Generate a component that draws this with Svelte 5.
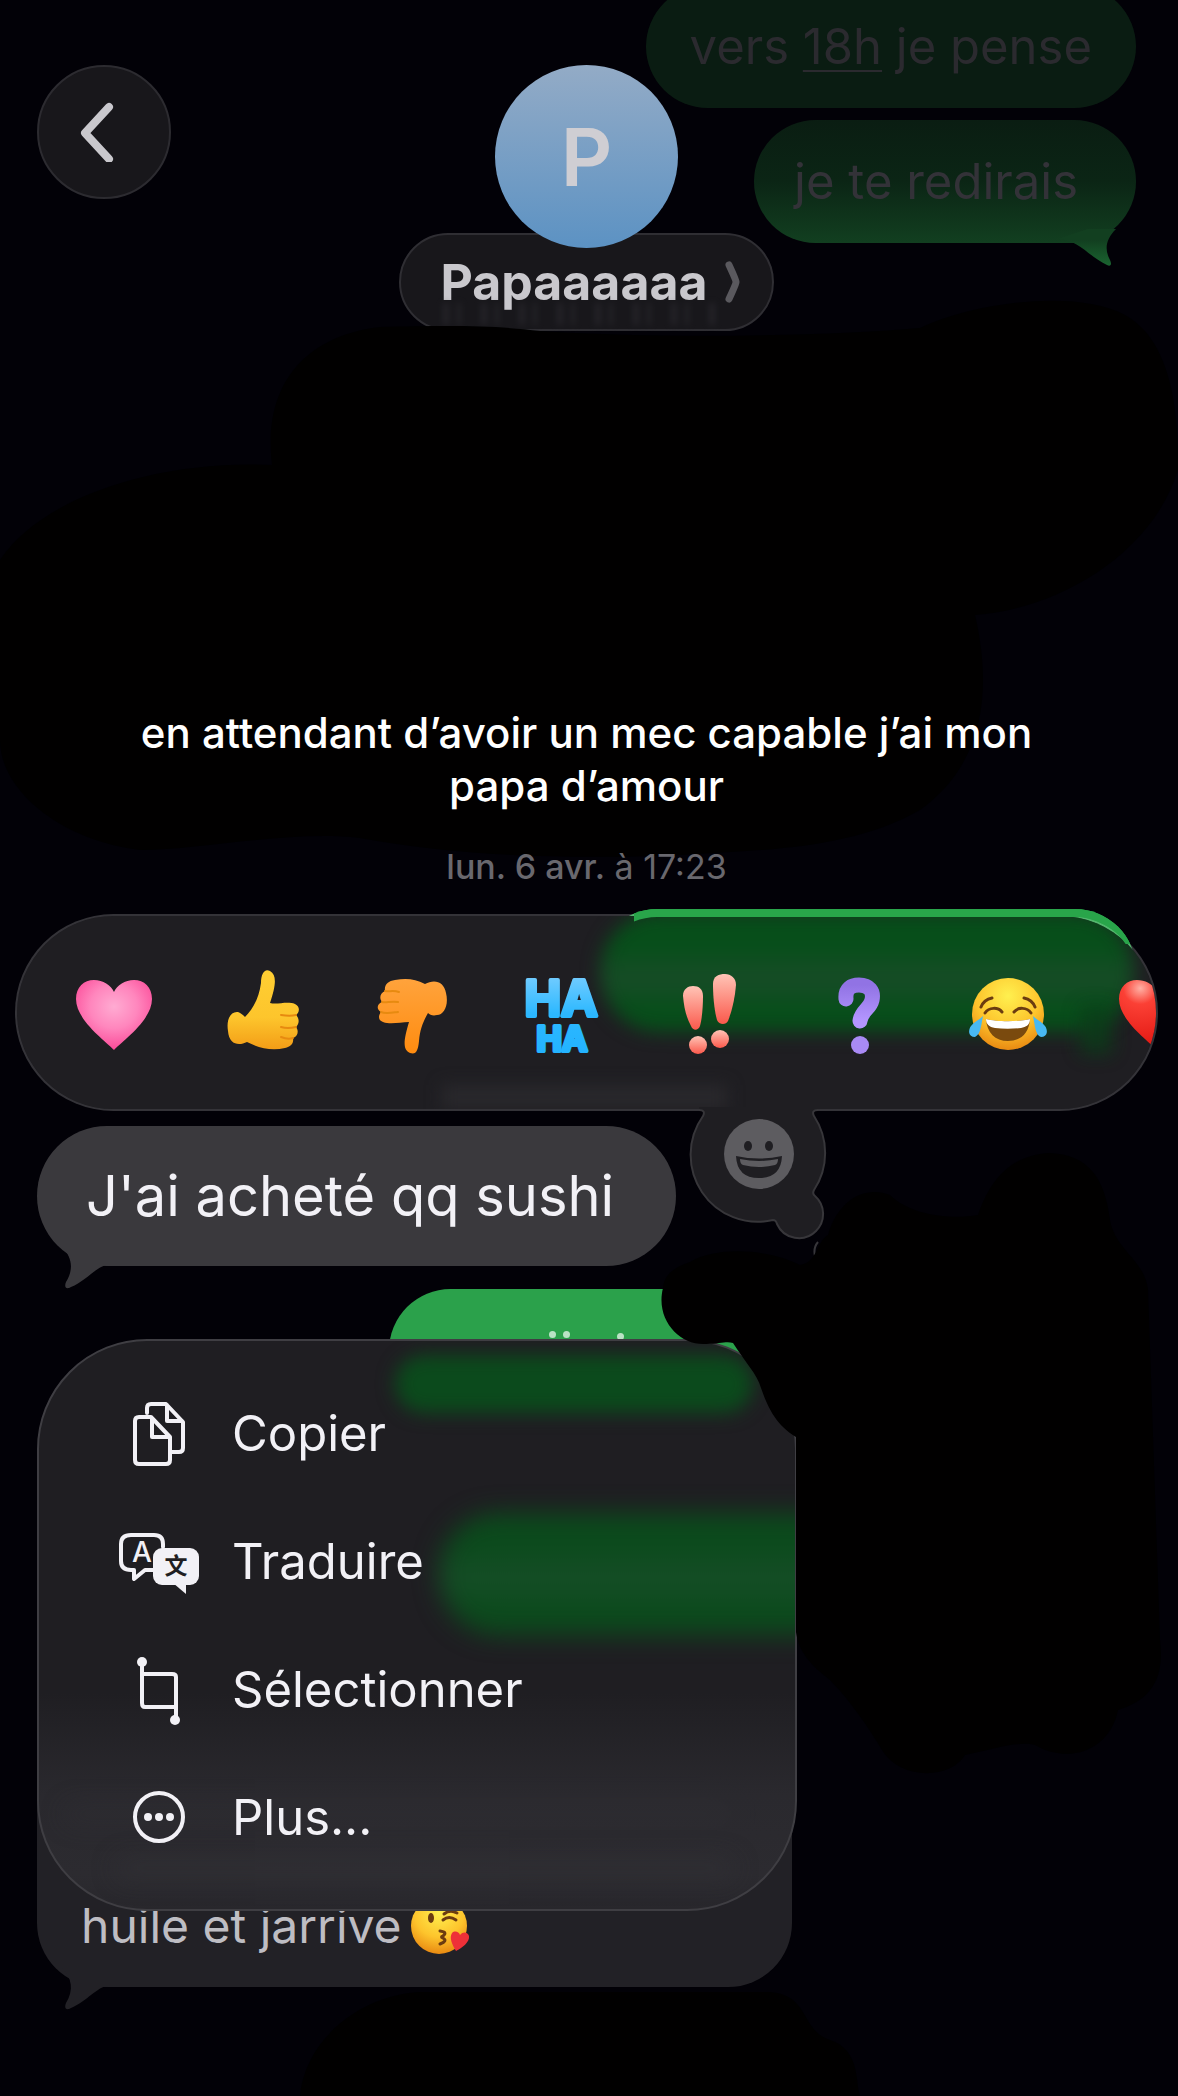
<script lang="ts">
  // Message thread with the reaction picker and context menu open

  interface Reaction {
    id: string;
    label: string;
  }

  interface Action {
    id: string;
    label: string;
  }

  const contact = { name: 'Papaaaaaa', initial: 'P' };

  const reactions: Reaction[] = [
    { id: 'heart', label: 'Cœur' },
    { id: 'up', label: 'Pouce en haut' },
    { id: 'down', label: 'Pouce en bas' },
    { id: 'haha', label: 'Haha' },
    { id: 'exclaim', label: 'Exclamation' },
    { id: 'question', label: 'Question' },
    { id: 'joy', label: 'Larmes de joie' },
    { id: 'red', label: 'Cœur rouge' },
  ];

  const actions: Action[] = [
    { id: 'copy', label: 'Copier' },
    { id: 'translate', label: 'Traduire' },
    { id: 'select', label: 'Sélectionner' },
    { id: 'more', label: 'Plus...' },
  ];

  let selected = $state('');

  function react(id: string) {
    selected = selected === id ? '' : id;
  }
</script>

{#snippet reactionIcon(id: string)}
  <svg class="emoji" viewBox="0 0 84 84" width="84" height="84" aria-hidden="true">
    {#if id === 'heart' || id === 'red'}
      <path
        d="M42 79C36 72 4 50 4 28C4 16 12 9 22 9C31 9 39 14 42 21C45 14 53 9 62 9C72 9 80 16 80 28C80 50 48 72 42 79Z"
        fill="url(#{id === 'heart' ? 'pink' : 'red'})"
      />
    {:else if id === 'up'}
      <path
        d="M24 46C32 38 38 27 40 12C40 2 44 -3 49 0C56 4 55 14 49 32C56 34 66 30 74 33C80 36 78 42 75 44C79 48 78 53 75 56C78 60 77 65 72 67C73 72 70 76 64 77C50 80 38 77 26 71C18 75 8 74 7 60C5 48 10 40 17 41C20 42 22 44 24 46Z"
        fill="url(#thumb)"
      />
      <path d="M60 44C66 45 71 45 75 44M60 56C66 58 71 57 75 56M60 66C65 68 69 68 72 67" class="crease" />
    {:else if id === 'down'}
      <path
        d="M58 42C53 51 50 58 49 70C48 80 46 84 40 82C33 79 33 71 39 51C30 51 21 54 13 51C7 49 9 43 11 41C6 38 7 33 12 31C9 27 10 22 15 20C14 14 18 10 25 9C37 7 45 8 55 13C64 8 74 10 76 22C79 34 74 44 67 44C63 45 60 44 58 42Z"
        fill="url(#thumbDown)"
      />
      <path d="M28 41C20 42 15 43 11 41M28 31C21 30 16 32 12 31M29 21C23 19 19 21 15 20" class="crease" />
    {:else if id === 'haha'}
      <text class="ha"><tspan x="42" y="45" class="big">HA</tspan><tspan x="43" y="80" class="small">HA</tspan></text>
    {:else if id === 'exclaim'}
      <path d="M15 25C15 18 20 15 25 15C31 15 35 18 35 25C35 36 34 48 32 55C30 60 25 60 23 55C18 46 16 36 15 25Z" fill="url(#coral)" />
      <path d="M45 13C45 5 51 3 57 3C63 3 68 7 68 14C67 27 64 40 60 50C58 54 51 54 49 49C46 38 45 24 45 13Z" fill="url(#coral)" />
      <circle cx="30" cy="74" r="9" fill="url(#coral)" />
      <circle cx="52" cy="68" r="9" fill="url(#coral)" />
    {:else if id === 'question'}
      <path d="M29 28C28 17 35 14 42 14C52 14 57 20 55 29C53 38 44 40 43 50" class="hook" />
      <circle cx="43" cy="74" r="9" fill="#a98af5" />
    {:else if id === 'joy'}
      <circle cx="42" cy="43" r="36" fill="url(#face)" />
      <path d="M20 48C31 51 53 51 64 48C63 62 55 70 42 70C29 70 21 62 20 48Z" fill="#7a4a0e" />
      <path d="M20 48C31 51 53 51 64 48C64 54 60 56 55 57C46 58 37 58 29 57C23 56 20 53 20 48Z" fill="#fff" />
      <path d="M19 42C23 36 32 36 36 41M48 41C52 36 61 36 65 42M15 36C17 31 21 28 26 27M69 36C67 31 63 28 58 27" class="brow" />
      <path d="M17 45C15 54 15 63 9 66C2 66 2 59 5 55C8 51 13 49 17 45Z" fill="#48b9f2" />
      <path d="M67 45C69 54 69 64 75 66C82 66 82 59 79 55C76 51 71 49 67 45Z" fill="#48b9f2" />
    {/if}
  </svg>
{/snippet}

{#snippet actionIcon(id: string)}
  <svg class="action-icon" viewBox="0 0 84 72" width="84" height="72" aria-hidden="true">
    {#if id === 'copy'}
      <path d="M22 16V11Q22 7 26 7H41L58 25V51Q58 55 54 55H47M42 8V24H57" />
      <path d="M14 20H26L45 40V63Q45 67 41 67H14Q10 67 10 63V24Q10 20 14 20M27 21V40H44" />
    {:else if id === 'translate'}
      <path d="M28 45H20L9 54V45H6Q-4 45 -4 36V19Q-4 10 6 10H29Q38 10 38 19V22" />
      <text x="17" y="37" class="latin">A</text>
      <rect x="28" y="23" width="46" height="37" rx="9" class="solid" />
      <path d="M48 58L61 69V58Z" class="solid" />
      <text x="51" y="49" class="han">文</text>
    {:else if id === 'select'}
      <path d="M17 12V50Q17 54 20 54H50M17 21H47Q51 21 51 24V67" />
      <circle cx="17" cy="9" r="5" class="solid" />
      <circle cx="50" cy="67" r="5" class="solid" />
    {:else}
      <circle cx="34" cy="36" r="24" />
      <circle cx="23" cy="36" r="4" class="solid" />
      <circle cx="34" cy="36" r="4" class="solid" />
      <circle cx="45" cy="36" r="4" class="solid" />
    {/if}
  </svg>
{/snippet}

<svg class="defs" width="0" height="0" aria-hidden="true">
  <defs>
    <radialGradient id="pink" cx="50%" cy="38%" r="62%">
      <stop offset="0" stop-color="#ffabd2" />
      <stop offset="0.5" stop-color="#ff86bd" />
      <stop offset="1" stop-color="#fb4a98" />
    </radialGradient>
    <radialGradient id="red" cx="28%" cy="12%" r="90%">
      <stop offset="0" stop-color="#ffb0a4" />
      <stop offset="0.25" stop-color="#fb4035" />
      <stop offset="1" stop-color="#e0140f" />
    </radialGradient>
    <linearGradient id="thumb" x1="0" y1="0" x2="0" y2="1">
      <stop offset="0" stop-color="#ffcf33" />
      <stop offset="0.6" stop-color="#fdc52c" />
      <stop offset="1" stop-color="#f39d17" />
    </linearGradient>
    <linearGradient id="thumbDown" x1="0" y1="0" x2="0" y2="1">
      <stop offset="0" stop-color="#ffa33c" />
      <stop offset="1" stop-color="#ff8c10" />
    </linearGradient>
    <linearGradient id="coral" x1="0" y1="0" x2="0" y2="1">
      <stop offset="0" stop-color="#ffc4b6" />
      <stop offset="1" stop-color="#fb594c" />
    </linearGradient>
    <linearGradient id="violet" x1="0" y1="0" x2="0" y2="1">
      <stop offset="0" stop-color="#9173e4" />
      <stop offset="1" stop-color="#b496ff" />
    </linearGradient>
    <linearGradient id="ice" x1="0" y1="0" x2="0" y2="1">
      <stop offset="0" stop-color="#7fd0ff" />
      <stop offset="0.5" stop-color="#2cb8ff" />
      <stop offset="1" stop-color="#22b2ff" />
    </linearGradient>
    <radialGradient id="face" cx="50%" cy="25%" r="75%">
      <stop offset="0" stop-color="#fff04f" />
      <stop offset="0.6" stop-color="#fdc42c" />
      <stop offset="1" stop-color="#e98a12" />
    </radialGradient>
    <linearGradient id="sentTail" x1="0" y1="0" x2="0" y2="1">
      <stop offset="0.3" stop-color="#123f20" />
      <stop offset="1" stop-color="#1a6430" />
    </linearGradient>
  </defs>
</svg>

<main class="screen">
  <div class="top">
    <div class="sent-group">
      <p class="bubble sent faded">vers <u>18h</u> je pense</p>
      <p class="bubble sent fading">
        je te redirais
        <svg class="tail right" viewBox="0 0 44 36" width="44" height="36" aria-hidden="true">
          <path d="M-16 10C4 10 14 27 33 36C37 38 38 35 36 31C30 20 32 10 42 0L14 0Z" fill="url(#sentTail)" />
        </svg>
      </p>
    </div>

    <header class="header">
      <button class="back" aria-label="Retour">
        <svg viewBox="0 0 60 60" width="60" height="60" aria-hidden="true">
          <path d="M35 5L11 31L35 57" />
        </svg>
      </button>
      <div class="contact">
        <div class="avatar">{contact.initial}</div>
        <button class="name">
          {contact.name}
          <svg viewBox="0 0 20 44" width="20" height="44" aria-hidden="true">
            <path d="M7 5Q14 20 14 22Q14 24 7 39" />
          </svg>
          <span class="ghost"></span>
        </button>
      </div>
    </header>
  </div>

  <div class="thread">
    <h1 class="caption">en attendant d’avoir un mec capable j’ai mon papa d’amour</h1>
    <time class="date" datetime="04-06T17:23"><b>lun. 6 avr.</b> à 17:23</time>

    <section class="picker" aria-label="Réactions">
      <div class="under"></div>
      <div class="bar">
        <span class="glow"></span>
        <span class="glow-tail"></span>
        <span class="haze"></span>
        {#each reactions as { id, label } (id)}
          <button class="reaction" aria-label={label} aria-pressed={selected === id} onclick={() => react(id)}>
            {@render reactionIcon(id)}
          </button>
        {/each}
      </div>
      <div class="lip"></div>
      <button class="more-emoji" aria-label="Autres emojis">
        <svg viewBox="0 0 160 160" width="160" height="160" aria-hidden="true">
          <path
            class="pod-fill"
            d="M19 6Q26 6 23 12A67 67 0 0 0 93 116Q96 116 97 120A24 24 0 0 0 136 127A24 24 0 0 0 135 92Q132 90 134 86A67 67 0 0 0 134 12Q131 6 138 6V3H19Z"
          />
          <path
            class="pod-line"
            d="M19 6Q26 6 23 12A67 67 0 0 0 93 116Q96 116 97 120A24 24 0 0 0 136 127A24 24 0 0 0 135 92Q132 90 134 86A67 67 0 0 0 134 12Q131 6 138 6M138 138Q133 144 135 152"
          />
          <circle cx="79" cy="50" r="35" fill="#5d5c60" />
          <ellipse cx="68" cy="42" rx="4" ry="5" fill="#1f1e22" />
          <ellipse cx="89" cy="42" rx="4" ry="5" fill="#1f1e22" />
          <path d="M56 52Q79 57 102 52Q101 74 79 74Q57 74 56 52Z" fill="#1f1e22" />
          <path d="M60 55Q79 59 98 55Q98 60 95 61Q79 65 63 61Q60 60 60 55Z" fill="#5d5c60" />
        </svg>
      </button>
    </section>

    <p class="bubble received">
      J'ai acheté qq sushi
      <svg class="tail left" viewBox="0 0 52 42" width="52" height="42" aria-hidden="true">
        <path d="M0 0C10 10 12 22 4 35C2 40 4 43 9 40C24 34 36 18 46 18H52V0Z" fill="#3a393d" />
      </svg>
    </p>

    <div class="bubble sent peek">
      <span></span><span></span><span></span>
    </div>

    <ul class="menu">
      <li class="backdrop" aria-hidden="true">
        <span class="green one"></span>
        <span class="green two"></span>
        <span class="gray one"></span>
        <span class="gray two"></span>
      </li>
      {#each actions as { id, label } (id)}
        <li>
          <button class="action">
            {@render actionIcon(id)}
            {label}
          </button>
        </li>
      {/each}
    </ul>

    <p class="bubble received dim">
      huile et jarrive<svg class="kiss" viewBox="0 0 60 60" width="60" height="60" role="img" aria-label="😘">
        <circle cx="29" cy="30" r="28" fill="url(#face)" />
        <ellipse cx="21" cy="22" rx="3" ry="5" fill="#6b3c10" />
        <path d="M33 24Q39 19 46 24M34 18Q40 13 47 17M9 13Q13 7 19 8M30 35Q38 36 33 40Q30 41 33 42Q38 45 30 48" class="wink" />
        <path d="M46 55C42 48 39 42 42 37C45 34 49 36 50 39C53 35 58 36 59 40C60 46 52 52 46 55Z" fill="#ee3038" />
      </svg>
      <svg class="tail left" viewBox="0 0 52 42" width="52" height="42" aria-hidden="true">
        <path d="M0 0C10 10 12 22 4 35C2 40 4 43 9 40C24 34 36 18 46 18H52V0Z" fill="#222126" />
      </svg>
    </p>
  </div>

  <!-- brush strokes hiding part of the thread -->
  <svg class="brush" viewBox="0 0 1178 2096" aria-hidden="true">
    <path
      d="M272 465C262 380 310 335 380 327C460 325 500 326 540 331C680 340 840 335 920 328C980 300 1080 290 1125 315C1180 345 1178 440 1178 470C1150 560 1050 610 975 615C990 680 990 760 920 810C850 850 760 850 680 855C560 860 450 855 360 838C290 830 200 850 140 850C60 840 0 790 0 740V560C40 500 150 460 272 465Z"
    />
    <path
      d="M663 1288C655 1320 680 1346 706 1344C720 1344 726 1341 733 1343C745 1362 757 1374 761 1388C768 1408 776 1425 796 1437V1632C798 1650 810 1665 830 1680C850 1700 870 1730 882 1750C900 1780 950 1780 965 1755C990 1750 1020 1740 1035 1745C1070 1765 1110 1750 1118 1710C1150 1700 1165 1680 1160 1640L1148 1290C1145 1260 1115 1250 1110 1220C1105 1180 1090 1155 1050 1153C1010 1155 990 1180 978 1215C950 1220 910 1215 890 1195C865 1185 838 1200 828 1235C816 1242 818 1262 800 1265C770 1250 720 1245 690 1262C672 1268 664 1276 663 1288Z"
    />
    <path d="M300 2096C305 2040 360 1995 420 1992H770C810 1995 800 2030 830 2040C860 2050 855 2080 860 2096Z" />
  </svg>
</main>

<style>
  :global(body) {
    margin: 0;
    background: #020107;
  }

  .screen {
    position: relative;
    overflow: hidden;
    min-height: 100vh;
    background: #020107;
    font-family: Inter, 'Liberation Sans', sans-serif;
    color: #f2f1f6;
  }

  button {
    font: inherit;
    color: inherit;
    border: 0;
    padding: 0;
    background: none;
    cursor: pointer;
  }

  .defs {
    position: absolute;
  }

  .top {
    display: grid;
    height: 243px;
    padding: 0 42px 0 37px;
  }

  .sent-group,
  .header {
    grid-area: 1 / 1;
  }

  .sent-group {
    display: flex;
    flex-direction: column;
    align-items: flex-end;
    gap: 12px;
    margin-top: -15px;
  }

  .bubble {
    position: relative;
    box-sizing: border-box;
    flex-shrink: 0;
    margin: 0;
    padding: 31px 44px;
    border-radius: 70px;
    font-size: 49px;
    line-height: 61px;
    white-space: nowrap;
  }

  .faded {
    background: #0a1c12;
    color: #2b2a2f;
  }

  .faded u {
    text-decoration-thickness: 2px;
    text-underline-offset: 6px;
  }

  .fading {
    padding: 31px 58px 31px 40px;
    background: linear-gradient(#0a1d12 0%, #0b2515 50%, #123f20 100%);
    color: #333238;
  }

  .tail {
    position: absolute;
    overflow: visible;
  }

  .tail.right {
    right: 18px;
    bottom: -22px;
  }

  .tail.left {
    left: 25px;
    bottom: -23px;
  }

  .header {
    display: grid;
    grid-template-columns: 1fr auto 1fr;
    align-items: start;
    padding-top: 65px;
  }

  .back {
    display: flex;
    align-items: center;
    justify-content: center;
    box-sizing: border-box;
    width: 134px;
    height: 134px;
    border: 2px solid #2c2b30;
    border-radius: 50%;
    background: #18171b;
  }

  .back path {
    fill: none;
    stroke: #c9c8cd;
    stroke-width: 8;
    stroke-linecap: round;
    stroke-linejoin: round;
  }

  .contact {
    display: flex;
    flex-direction: column;
    align-items: center;
  }

  .avatar {
    z-index: 1;
    display: flex;
    align-items: center;
    justify-content: center;
    width: 183px;
    height: 183px;
    border-radius: 50%;
    background: linear-gradient(#93abc6, #5c92c3);
    color: #cfced3;
    font-size: 80px;
    font-weight: 600;
  }

  .name {
    position: relative;
    display: flex;
    align-items: center;
    gap: 15px;
    box-sizing: border-box;
    height: 98px;
    margin-top: -15px;
    padding: 0 30px 0 40px;
    border: 2px solid #2f2e33;
    border-radius: 49px;
    background: #18171b;
    color: #c9c8cd;
    font-size: 50px;
    font-weight: 700;
  }

  .name path {
    fill: none;
    stroke: #5a595e;
    stroke-width: 7;
    stroke-linecap: round;
  }

  .ghost {
    position: absolute;
    right: 50px;
    bottom: 4px;
    left: 42px;
    height: 22px;
    background: repeating-linear-gradient(90deg, #2a292e 0 6px, transparent 6px 14px, #2a292e 14px 18px, transparent 18px 38px);
    filter: blur(3px);
    opacity: 0.7;
  }

  .thread {
    display: flex;
    flex-direction: column;
    align-items: flex-start;
    padding: 463px 42px 109px 37px;
  }

  .caption {
    z-index: 3;
    align-self: center;
    max-width: 920px;
    margin: 0;
    color: #fff;
    font-size: 42px;
    font-weight: 500;
    line-height: 53px;
    text-align: center;
  }

  .date {
    z-index: 3;
    align-self: center;
    margin-top: 36px;
    color: #69686e;
    font-size: 34px;
    line-height: 38px;
  }

  .date b {
    font-weight: 500;
  }

  .picker {
    position: relative;
    z-index: 1;
    align-self: stretch;
    margin: 28px -22px 0;
  }

  .under,
  .lip {
    position: absolute;
    top: -5px;
    right: 22px;
    width: 540px;
    height: 123px;
    border-radius: 61px;
  }

  .under {
    background: #29a54a;
  }

  /* top rim of the sent bubble, refracted over the bar's edge */
  .lip {
    box-shadow: inset 0 8px 0 #29a54a;
    clip-path: inset(0 0 88px 38px);
    pointer-events: none;
  }

  .bar {
    position: relative;
    display: flex;
    align-items: center;
    box-sizing: border-box;
    height: 197px;
    padding-left: 22px;
    overflow: hidden;
    border: 2px solid rgba(255, 255, 255, 0.2);
    border-radius: 99px;
    background: #1f1e22;
    background-clip: padding-box;
  }

  .glow,
  .glow-tail {
    position: absolute;
    filter: blur(9px);
  }

  .glow {
    top: -4px;
    right: 22px;
    width: 534px;
    height: 120px;
    border-radius: 61px;
    background: linear-gradient(#074e1a 30%, #154c25 50%, #154c25 62%, #074e1a 80%);
  }

  .glow-tail {
    top: 90px;
    right: 44px;
    width: 32px;
    height: 48px;
    background: #0b3d19;
    opacity: 0.8;
  }

  .haze {
    position: absolute;
    bottom: 0;
    left: 425px;
    width: 285px;
    height: 24px;
    background: #29282c;
    filter: blur(8px);
  }

  .reaction {
    position: relative;
    display: flex;
    justify-content: center;
    flex: 0 0 149px;
  }

  .emoji {
    overflow: visible;
  }

  .crease {
    fill: none;
    stroke: #e78a10;
    stroke-width: 2;
    stroke-linecap: round;
  }

  .ha {
    font-weight: 700;
    text-anchor: middle;
    fill: url(#ice);
    stroke: url(#ice);
    stroke-width: 4;
    stroke-linejoin: round;
  }

  .big {
    font-size: 49px;
  }

  .small {
    font-size: 34px;
  }

  .hook {
    fill: none;
    stroke: url(#violet);
    stroke-width: 15;
    stroke-linecap: round;
  }

  .brow,
  .wink {
    fill: none;
    stroke: #6b3c10;
    stroke-width: 3;
    stroke-linecap: round;
  }

  .more-emoji {
    position: absolute;
    top: 190px;
    left: 665px;
    height: 160px;
  }

  .pod-fill {
    fill: #1f1e22;
  }

  .pod-line {
    fill: none;
    stroke: #37363a;
    stroke-width: 2;
  }

  .received {
    margin-top: 15px;
    padding: 35px 62px 35px 49px;
    background: #3a393d;
    font-size: 56px;
    line-height: 70px;
  }

  .peek {
    display: flex;
    gap: 7px;
    width: 420px;
    height: 123px;
    margin-top: 23px;
    margin-left: 352px;
    padding: 42px 0 0 160px;
    background: #2ba14b;
  }

  .peek span {
    width: 7px;
    height: 7px;
    border-radius: 50%;
    background: #b9e3c4;
  }

  .peek span:last-child {
    margin-top: 2px;
    margin-left: 40px;
  }

  .menu {
    position: relative;
    z-index: 1;
    box-sizing: border-box;
    width: 760px;
    max-width: 100%;
    margin: -73px 0 0;
    padding: 28px 0;
    overflow: hidden;
    list-style: none;
    border: 2px solid #3f3e43;
    border-radius: 110px;
    background: linear-gradient(#1f1e22 0%, #1f1e22 62%, #2a292e 80%, #2c2b30 94%, #28272c 100%);
  }

  .backdrop {
    position: absolute;
    inset: 0;
  }

  .green,
  .gray {
    position: absolute;
    border-radius: 60px;
    filter: blur(12px);
  }

  .green {
    background: #0b4a1c;
  }

  .green.one {
    top: 14px;
    right: 42px;
    width: 358px;
    height: 58px;
    filter: blur(9px);
  }

  .green.two {
    top: 172px;
    right: -80px;
    width: 436px;
    height: 122px;
    background: linear-gradient(#0b4a1c 30%, #144d25 45%, #144d25 60%, #0b4a1c 80%);
  }

  .gray {
    height: 22px;
    background: #313035;
  }

  .gray.one {
    bottom: 84px;
    left: 24px;
    width: 670px;
    opacity: 0.4;
  }

  .gray.two {
    bottom: 30px;
    left: 76px;
    width: 620px;
    opacity: 0.7;
  }

  .action {
    position: relative;
    display: flex;
    align-items: center;
    gap: 23px;
    width: 100%;
    height: 128px;
    padding-left: 86px;
    font-size: 49px;
    text-align: left;
  }

  .action-icon {
    overflow: visible;
    fill: none;
    stroke: #f2f1f6;
    stroke-width: 4;
    stroke-linecap: round;
    stroke-linejoin: round;
  }

  .solid {
    fill: #f2f1f6;
    stroke: none;
  }

  .latin,
  .han {
    stroke: none;
    text-anchor: middle;
  }

  .latin {
    fill: #f2f1f6;
    font-size: 28px;
    font-weight: 500;
  }

  .han {
    fill: #1f1e22;
    font-family: 'Noto Sans CJK SC', sans-serif;
    font-size: 23px;
    font-weight: 700;
  }

  .dim {
    width: 755px;
    max-width: 100%;
    margin-top: -190px;
    padding: 174px 44px 31px;
    border-radius: 64px;
    background: #222126;
    color: #bebdc3;
    font-size: 48px;
    line-height: 61px;
  }

  .kiss {
    margin-left: 8px;
    vertical-align: -13px;
  }

  .brush {
    position: absolute;
    z-index: 2;
    top: 0;
    left: 0;
    width: 100%;
    fill: #010000;
    pointer-events: none;
  }
</style>
